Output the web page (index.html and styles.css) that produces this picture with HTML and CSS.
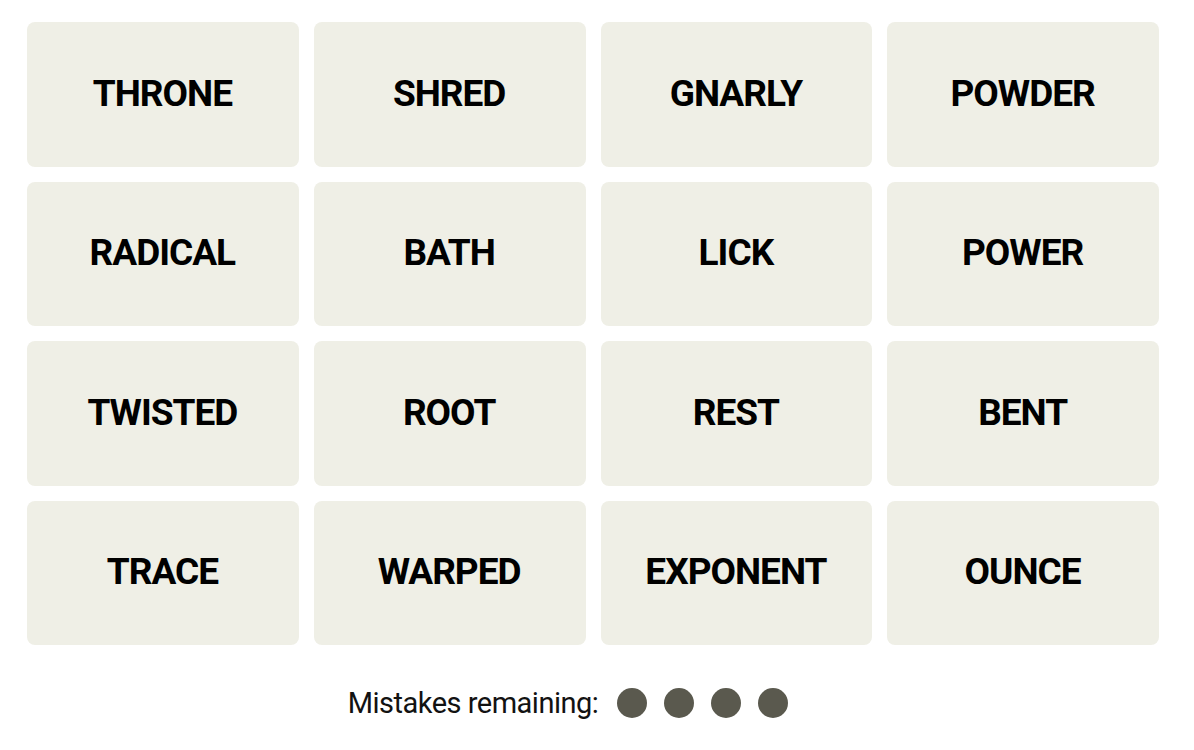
FILE: index.html
```html
<!DOCTYPE html>
<html lang="en">
<head>
    <meta charset="UTF-8">
    <meta name="viewport" content="width=device-width, initial-scale=1.0">
    <title>Connections</title>
    <link rel="stylesheet" href="styles.css">
</head>
<body>
    <section class="board">
        <div class="grid">
            <button class="tile">THRONE</button>
            <button class="tile">SHRED</button>
            <button class="tile">GNARLY</button>
            <button class="tile">POWDER</button>
            <button class="tile">RADICAL</button>
            <button class="tile">BATH</button>
            <button class="tile">LICK</button>
            <button class="tile">POWER</button>
            <button class="tile">TWISTED</button>
            <button class="tile">ROOT</button>
            <button class="tile">REST</button>
            <button class="tile">BENT</button>
            <button class="tile">TRACE</button>
            <button class="tile">WARPED</button>
            <button class="tile">EXPONENT</button>
            <button class="tile">OUNCE</button>
        </div>

        <div class="mistakes">
            <span class="mistakes-label">Mistakes remaining:</span>
            <span class="dots">
                <span class="dot"></span>
                <span class="dot"></span>
                <span class="dot"></span>
                <span class="dot"></span>
            </span>
        </div>
    </section>
</body>
</html>
```

FILE: styles.css
```css
body {
    margin: 0;
    padding: 0;
    background: #fff;
    font-family: 'Roboto', 'Liberation Sans', sans-serif;
    color: #000;
}

.board {
    padding: 22px 35px 0 27px;
}

.grid {
    display: grid;
    grid-template-columns: repeat(4, 1fr);
    grid-auto-rows: 144.5px;
    gap: 15px;
}

.tile {
    background: #efefe6;
    border: none;
    border-radius: 8px;
    font-family: inherit;
    font-size: 37px;
    font-weight: 700;
    letter-spacing: -1px;
    color: #000;
    cursor: pointer;
    padding: 0 0 2px 0;
    text-indent: -1px;
}

.mistakes {
    display: flex;
    justify-content: center;
    align-items: center;
    gap: 19px;
    margin-top: 41px;
    padding-right: 50px;
}

.mistakes-label {
    font-size: 29px;
    letter-spacing: -0.5px;
    color: #121212;
}

.dots {
    display: flex;
    gap: 17px;
}

.dot {
    width: 30px;
    height: 30px;
    border-radius: 50%;
    background: #5a594e;
}
```
